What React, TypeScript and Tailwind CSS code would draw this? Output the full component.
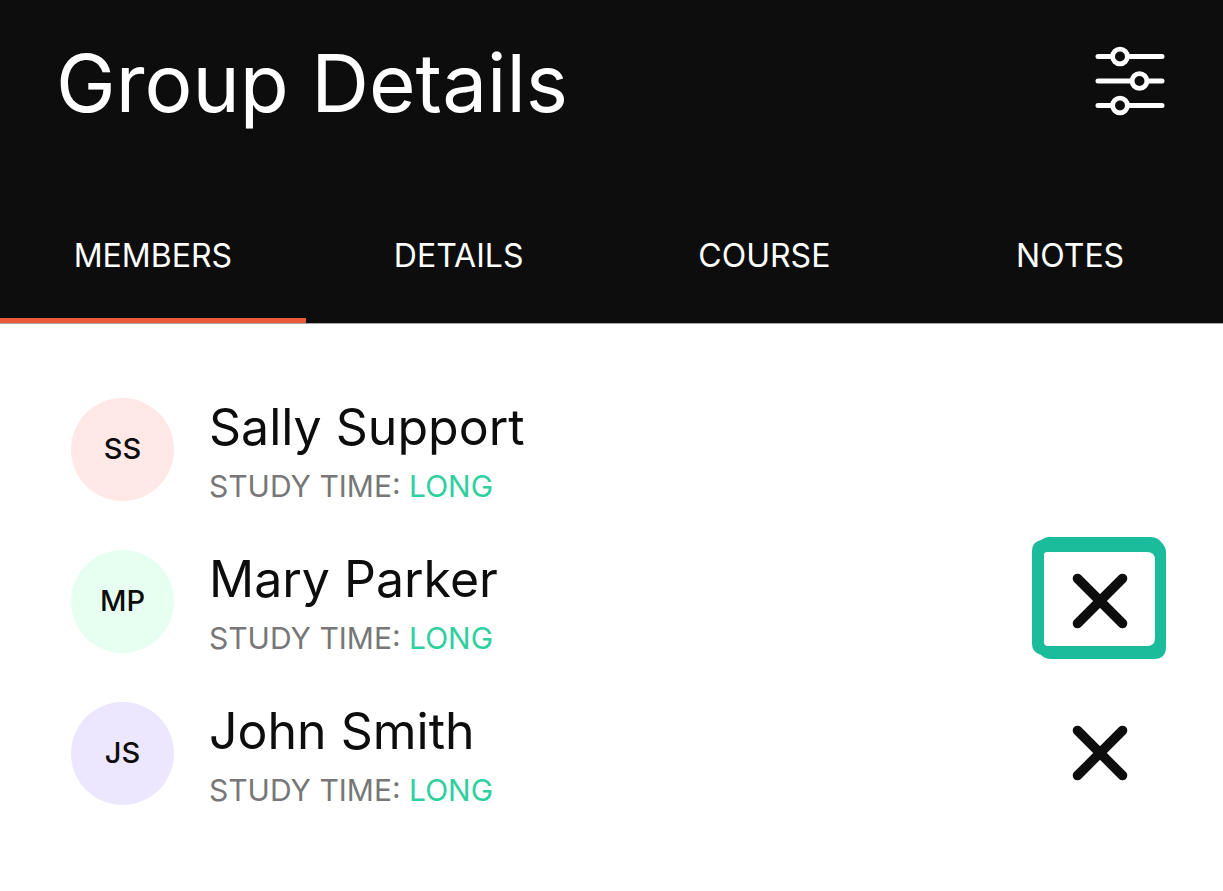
import { useState } from "react";
import clsx from "clsx";

interface Member {
  id: number;
  name: string;
  initials: string;
  studyTime: string;
  avatarClass: string;
  removable: boolean;
  highlighted: boolean;
}

const tabs = ["MEMBERS", "DETAILS", "COURSE", "NOTES"];

const initialMembers: Member[] = [
  { id: 1, name: "Sally Support", initials: "SS", studyTime: "LONG", avatarClass: "bg-[#ffe8e6]", removable: false, highlighted: false },
  { id: 2, name: "Mary Parker", initials: "MP", studyTime: "LONG", avatarClass: "bg-[#e6fff1]", removable: true, highlighted: true },
  { id: 3, name: "John Smith", initials: "JS", studyTime: "LONG", avatarClass: "bg-[#ece7ff]", removable: true, highlighted: false },
];

function FilterIcon() {
  return (
    <svg width="70" height="70" viewBox="0 0 70 70" fill="none" stroke="white" strokeWidth="5" strokeLinecap="round" aria-hidden="true">
      <path d="M3 10.5H17M33 10.5H67M3 35H36M53 35H67M3 59.5H17M33 59.5H67" />
      <circle cx="25" cy="10.5" r="7.4" strokeWidth="4.8" />
      <circle cx="44.5" cy="35" r="7.4" strokeWidth="4.8" />
      <circle cx="25" cy="59.5" r="7.4" strokeWidth="4.8" />
    </svg>
  );
}

function CloseIcon() {
  return (
    <svg width="58" height="58" viewBox="0 0 58 58" fill="none" stroke="#0d0d0d" strokeWidth="9.6" strokeLinecap="round" aria-hidden="true">
      <path d="M7.5 6.5L52.5 51.5M52.5 6.5L7.5 51.5" />
    </svg>
  );
}

// Hand-drawn frame around the remove button
function HighlightFrame() {
  return (
    <svg className="absolute inset-x-0 top-0" width="134" height="122" viewBox="0 0 134 122" aria-hidden="true">
      <path
        fill="#1bbc9b"
        fillRule="evenodd"
        d="M17 0H119Q126 0 130 6Q134 10 134 16V110Q134 122 122 122H19Q13 122 9 118Q0 115 0 107V14Q0 5 9 3Q13 0 17 0ZM15 15Q12 15 12 18V105Q12 109 16 109H115Q123 109 123 101V23Q123 15 115 15Z"
      />
    </svg>
  );
}

function MemberRow({ member, onRemove }: { member: Member; onRemove: (id: number) => void }) {
  return (
    <li className="flex h-[152px] items-center">
      <div
        className={clsx(
          "flex size-[103px] shrink-0 items-center justify-center rounded-full text-[29px] font-medium",
          member.avatarClass
        )}
      >
        {member.initials}
      </div>
      <div className="ml-[35px] min-w-0 flex-1 pt-[6px]">
        <h2 className="text-[50px] leading-[68px]">{member.name}</h2>
        <p className="text-[30px] leading-[50px] text-[#777777]">
          STUDY TIME: <span className="text-[#2fcf9f]">{member.studyTime}</span>
        </p>
      </div>
      {member.removable && (
        <button
          type="button"
          aria-label={`Remove ${member.name}`}
          onClick={() => onRemove(member.id)}
          className="relative flex h-[128px] w-[134px] items-center justify-center"
        >
          <CloseIcon />
          {member.highlighted && <HighlightFrame />}
        </button>
      )}
    </li>
  );
}

function App() {
  const [activeTab, setActiveTab] = useState("MEMBERS");
  const [members, setMembers] = useState(initialMembers);

  const handleRemove = (id: number) => {
    setMembers((prev) => prev.filter((member) => member.id !== id));
  };

  return (
    <div className="min-h-screen bg-white font-[Inter,sans-serif] text-[#0d0d0d]">
      <header className="border-b border-[#a6a6a6] bg-[#0d0d0d] text-white">
        <div className="flex items-start justify-between pt-[26px] pr-[58px] pl-14">
          <h1 className="text-[80px] leading-[114px]">Group Details</h1>
          <button type="button" aria-label="Filter group" className="mt-5">
            <FilterIcon />
          </button>
        </div>
        <nav role="tablist" className="grid grid-cols-4 pt-14">
          {tabs.map((tab) => (
            <button
              key={tab}
              type="button"
              role="tab"
              aria-selected={activeTab === tab}
              onClick={() => setActiveTab(tab)}
              className={clsx(
                "border-b-5 pt-7 pb-[30px] text-[32px] leading-[64px]",
                activeTab === tab ? "border-[#ec5a38]" : "border-transparent"
              )}
            >
              {tab}
            </button>
          ))}
        </nav>
      </header>

      <ul className="pt-[49px] pr-[57px] pl-[71px]">
        {members.map((member) => (
          <MemberRow key={member.id} member={member} onRemove={handleRemove} />
        ))}
      </ul>
    </div>
  );
}

export default App;
